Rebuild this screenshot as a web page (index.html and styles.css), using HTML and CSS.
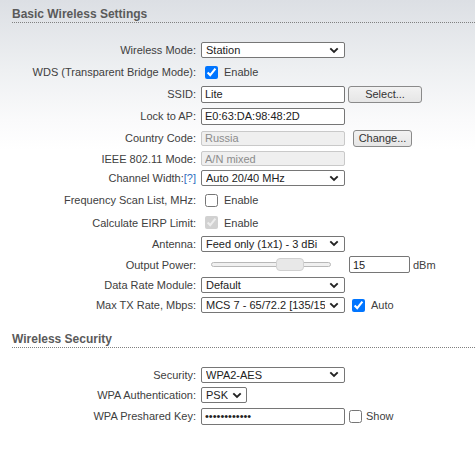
FILE: index.html
```html
<!DOCTYPE html>
<html lang="en">
<head>
<meta charset="utf-8">
<title>Wireless</title>
<link rel="stylesheet" href="styles.css">
</head>
<body>
<div class="page">
  <h2 class="section-title">Basic Wireless Settings</h2>
  <div class="form">
    <div class="row">
      <span class="label">Wireless Mode:</span>
      <div class="select wide"><span class="select-text">Station</span><svg class="chev" width="10" height="7" viewBox="0 0 10 7"><path d="M1.3 1.3 L5 5 L8.7 1.3" fill="none" stroke="#222" stroke-width="1.9"/></svg></div>
    </div>
    <div class="row">
      <span class="label">WDS (Transparent Bridge Mode):</span>
      <input type="checkbox" class="check" checked><span class="check-text">Enable</span>
    </div>
    <div class="row">
      <span class="label">SSID:</span>
      <input type="text" class="text wide" value="Lite">
      <button class="btn btn-select">Select...</button>
    </div>
    <div class="row">
      <span class="label">Lock to AP:</span>
      <input type="text" class="text wide" value="E0:63:DA:98:48:2D">
    </div>
    <div class="row">
      <span class="label">Country Code:</span>
      <input type="text" class="text wide disabled" value="Russia" disabled>
      <button class="btn btn-change">Change...</button>
    </div>
    <div class="row h19">
      <span class="label">IEEE 802.11 Mode:</span>
      <input type="text" class="text wide disabled" value="A/N mixed" disabled>
    </div>
    <div class="row h20">
      <span class="label">Channel Width:<a class="help">[?]</a></span>
      <div class="select wide"><span class="select-text">Auto 20/40 MHz</span><svg class="chev" width="10" height="7" viewBox="0 0 10 7"><path d="M1.3 1.3 L5 5 L8.7 1.3" fill="none" stroke="#222" stroke-width="1.9"/></svg></div>
    </div>
    <div class="row h24">
      <span class="label">Frequency Scan List, MHz:</span>
      <input type="checkbox" class="check"><span class="check-text">Enable</span>
    </div>
    <div class="row h21">
      <span class="label">Calculate EIRP Limit:</span>
      <input type="checkbox" class="check" checked disabled><span class="check-text">Enable</span>
    </div>
    <div class="row h21">
      <span class="label">Antenna:</span>
      <div class="select wide"><span class="select-text">Feed only (1x1) - 3 dBi</span><svg class="chev" width="10" height="7" viewBox="0 0 10 7"><path d="M1.3 1.3 L5 5 L8.7 1.3" fill="none" stroke="#222" stroke-width="1.9"/></svg></div>
    </div>
    <div class="row h21">
      <span class="label">Output Power:</span>
      <div class="slider">
        <div class="track"><div class="thumb"></div></div>
      </div>
      <input type="text" class="text power" value="15">
      <span class="unit">dBm</span>
    </div>
    <div class="row h20">
      <span class="label">Data Rate Module:</span>
      <div class="select wide"><span class="select-text">Default</span><svg class="chev" width="10" height="7" viewBox="0 0 10 7"><path d="M1.3 1.3 L5 5 L8.7 1.3" fill="none" stroke="#222" stroke-width="1.9"/></svg></div>
    </div>
    <div class="row h20">
      <span class="label">Max TX Rate, Mbps:</span>
      <div class="select wide"><span class="select-text">MCS 7 - 65/72.2 [135/150]</span><svg class="chev" width="10" height="7" viewBox="0 0 10 7"><path d="M1.3 1.3 L5 5 L8.7 1.3" fill="none" stroke="#222" stroke-width="1.9"/></svg></div>
      <input type="checkbox" class="check check-auto" checked><span class="check-text">Auto</span>
    </div>
  </div>

  <h2 class="section-title second">Wireless Security</h2>
  <div class="form">
    <div class="row h21">
      <span class="label">Security:</span>
      <div class="select wide"><span class="select-text">WPA2-AES</span><svg class="chev" width="10" height="7" viewBox="0 0 10 7"><path d="M1.3 1.3 L5 5 L8.7 1.3" fill="none" stroke="#222" stroke-width="1.9"/></svg></div>
    </div>
    <div class="row h20">
      <span class="label">WPA Authentication:</span>
      <div class="select narrow"><span class="select-text">PSK</span><svg class="chev" width="10" height="7" viewBox="0 0 10 7"><path d="M1.3 1.3 L5 5 L8.7 1.3" fill="none" stroke="#222" stroke-width="1.9"/></svg></div>
    </div>
    <div class="row">
      <span class="label">WPA Preshared Key:</span>
      <input type="password" class="text wide" value="abcdefghijkl">
      <input type="checkbox" class="check check-show"><span class="check-text show">Show</span>
    </div>
  </div>
</div>
</body>
</html>
```

FILE: styles.css
```css
html, body {
  margin: 0;
  padding: 0;
}
body {
  width: 475px;
  height: 452px;
  overflow: hidden;
  background: linear-gradient(to bottom, #dcdfe4 0px, #eef0f2 70px, #fafafb 120px, #ffffff 150px);
  font-family: "Liberation Sans", Arial, sans-serif;
  font-size: 11px;
  color: #404040;
}
.page {
  padding-top: 7px;
}
.section-title {
  margin: 0 0 0 12px;
  font-size: 12px;
  font-weight: bold;
  line-height: 14px;
  color: #5a5a5a;
  padding-bottom: 1px;
  border-bottom: 1px dotted #808080;
}
.section-title.second {
  margin-top: 17px;
}
.form {
  padding-top: 16px;
}
.row {
  display: flex;
  align-items: center;
  height: 22px;
}
.row.h19 { height: 19px; }
.row.h20 { height: 20px; }
.row.h21 { height: 21px; }
.row.h24 { height: 24px; }
.label {
  width: 196px;
  margin-right: 5px;
  text-align: right;
  white-space: nowrap;
  flex: none;
}
.help {
  color: #2f6fc0;
  cursor: pointer;
}
.select {
  box-sizing: border-box;
  height: 16px;
  display: flex;
  align-items: center;
  border: 1px solid #767676;
  border-radius: 2px;
  background: #fff;
  padding: 0 5px 0 4px;
  color: #222;
  flex: none;
}
.select.wide { width: 144px; }
.select.narrow { width: 46px; padding-right: 4px; }
.select-text {
  flex: 1;
  overflow: hidden;
  white-space: nowrap;
  margin-right: 4px;
}
.chev {
  flex: none;
  display: block;
}
.text {
  box-sizing: border-box;
  height: 17px;
  margin: 0;
  padding: 0 3px;
  border: 1px solid #767676;
  border-radius: 2px;
  background: #fff;
  font-family: "Liberation Sans", Arial, sans-serif;
  font-size: 11px;
  color: #222;
  outline: none;
  flex: none;
}
.text.wide { width: 144px; }
.text.disabled {
  height: 15px;
  border-color: #c9c9c9;
  background: #efefef;
  color: #8c8c8c;
}
.text.power {
  width: 61px;
  margin-left: 4px;
}
.unit {
  margin-left: 3px;
}
.btn {
  box-sizing: border-box;
  height: 17px;
  margin: 0;
  padding: 0;
  border: 1px solid #8a8a8a;
  border-radius: 3px;
  background: linear-gradient(#f2f2f2, #e6e6e6);
  font-family: "Liberation Sans", Arial, sans-serif;
  font-size: 11px;
  color: #333;
  flex: none;
}
.btn-select {
  width: 74px;
  margin-left: 3px;
}
.btn-change {
  width: 59px;
  margin-left: 8px;
}
.check {
  width: 13px;
  height: 13px;
  margin: 0 6px 0 4px;
  accent-color: #0075ff;
  flex: none;
}
.check-auto {
  margin-left: 7px;
}
.check-show {
  margin-left: 4px;
  margin-right: 4px;
}
.check-text {
  color: #404040;
}
.slider {
  width: 144px;
  height: 17px;
  display: flex;
  align-items: center;
  flex: none;
}
.track {
  position: relative;
  box-sizing: border-box;
  width: 120px;
  height: 5px;
  margin-left: 10px;
  border: 1px solid #b8b8b8;
  border-radius: 3px;
  background: #f0f0f0;
}
.thumb {
  position: absolute;
  left: 64px;
  top: -5px;
  box-sizing: border-box;
  width: 28px;
  height: 13px;
  border: 1px solid #d0d0d0;
  border-radius: 4px;
  background: #e8e8e8;
}
```
